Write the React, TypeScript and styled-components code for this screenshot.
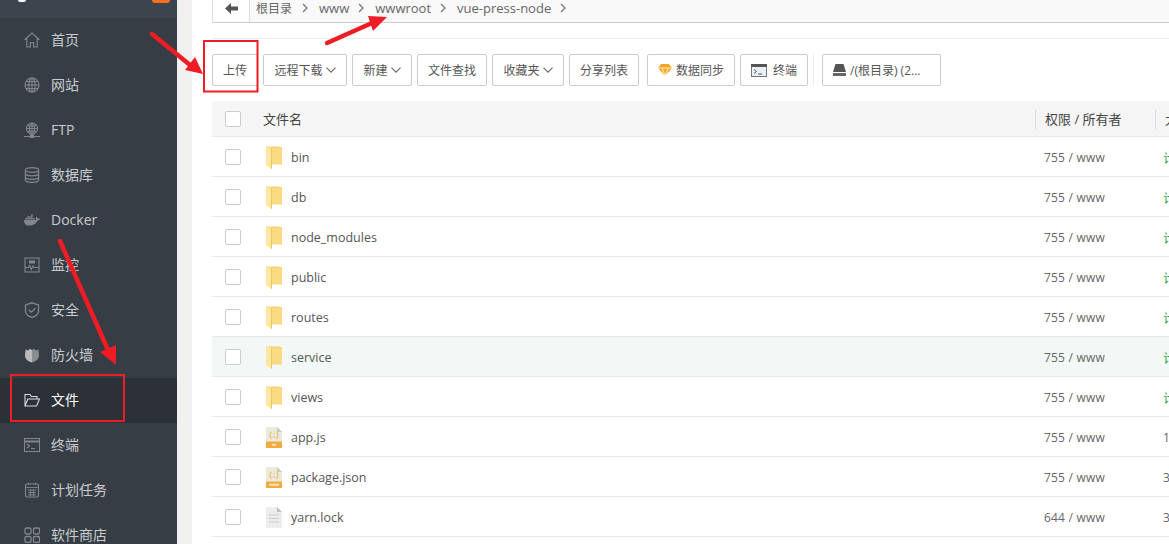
import React from "react";
import styled, { createGlobalStyle } from "styled-components";
import { FaDocker } from "react-icons/fa";

const Global = createGlobalStyle`
  html, body { margin: 0; padding: 0; background: #fff; height: 544px; overflow: hidden; }
  body { font-family: "Open Sans", "Noto Sans CJK SC", sans-serif; }
  * { box-sizing: border-box; }
`;

const Page = styled.div`
  position: relative;
  display: flex;
  width: 1169px;
  height: 544px;
  overflow: hidden;
`;
const Sidebar = styled.aside`
  width: 177px;
  flex: none;
  background: #373d44;
  display: flex;
  flex-direction: column;
`;
const SideHead = styled.div`
  height: 18px;
  flex: none;
  background: #3c444d;
  display: flex;
  align-items: flex-start;
  justify-content: space-between;
  padding: 0 7px 0 18px;
`;
const LogoStub = styled.span`
  width: 8px;
  height: 2px;
  background: #fff;
  border-radius: 0 0 4px 4px;
`;
const BadgeStub = styled.span`
  width: 18px;
  height: 3px;
  background: #f96e1d;
  border-radius: 0 0 5px 5px;
`;
const NavItem = styled.div<{ $active?: boolean }>`
  height: 45px;
  flex: none;
  display: flex;
  align-items: center;
  padding-left: 24px;
  gap: 11px;
  background: ${(p) => (p.$active ? "#2c3138" : "transparent")};
  color: ${(p) => (p.$active ? "#fff" : "#c8ccd0")};
  font-size: 14px;
  line-height: 16px;
  span { display: block; margin-top: -2px; }
  svg { width: 16px; height: 16px; flex: none; margin-top: -2px; color: ${(p) => (p.$active ? "#d8dadc" : "#83878c")}; }
`;
const Gutter = styled.div`
  width: 15px;
  flex: none;
  background: #f0f0f0;
`;
const Main = styled.main`
  flex: 1;
  min-width: 0;
  padding-left: 20px;
  background: #fff;
  overflow: hidden;
`;
const Crumbs = styled.div`
  height: 23px;
  display: flex;
  align-items: flex-end;
  background: #f9f9f9;
  border: 1px solid #ddd;
  border-top: 0;
  border-bottom: 1px solid #ccc;
  border-right: 0;
`;
const Back = styled.div`
  width: 37px;
  height: 22px;
  flex: none;
  background: #fff;
  border-right: 1px solid #ddd;
  display: flex;
  align-items: center;
  justify-content: center;
  padding-bottom: 6px;
  svg { width: 13px; height: 11px; color: #555; }
`;
const Crumb = styled.div<{ $root?: boolean }>`
  display: flex;
  align-items: center;
  height: 22px;
  padding-bottom: 7px;
  font-size: ${(p) => (p.$root ? 12 : 13)}px;
  color: #666;
  margin-left: 6px;
  gap: ${(p) => (p.$root ? 10 : 9)}px;
  svg { width: 6px; height: 10px; color: #777; margin-right: 5px; }
`;
const Rule = styled.div`
  height: 1px;
  margin-top: 15px;
  background: #eee;
`;
const Toolbar = styled.div`
  height: 32px;
  margin-top: 15px;
  display: flex;
  gap: 5px;
`;
const Btn = styled.div<{ $w: number; $gap?: number; $start?: boolean; $offset?: number }>`
  width: ${(p) => p.$w}px;
  height: 32px;
  flex: none;
  margin-left: ${(p) => p.$offset ?? 0}px;
  padding-left: ${(p) => (p.$start ? "10px" : "0")};
  border: 1px solid #ccc;
  border-radius: 2px;
  background: #fff;
  display: flex;
  align-items: center;
  justify-content: ${(p) => (p.$start ? "flex-start" : "center")};
  gap: ${(p) => p.$gap ?? 3}px;
  font-size: 12px;
  color: #555;
`;
const ToolSep = styled.div`
  width: 1px;
  height: 32px;
  background: #eee;
  margin: 0 3px 0 0;
`;
const Head = styled.div`
  height: 36px;
  margin-top: 15px;
  display: grid;
  grid-template-columns: 51px 772px 120px 40px;
  align-items: center;
  background: #f5f5f5;
  border-bottom: 1px solid #e8e8e8;
  width: 980px;
  font-size: 13px;
  color: #444;
`;
const Row = styled.div<{ $hl?: boolean }>`
  height: 40px;
  display: grid;
  grid-template-columns: 51px 28px 753px 119px 40px;
  align-items: center;
  width: 980px;
  border-bottom: 1px solid #e8e8e8;
  background: ${(p) => (p.$hl ? "#f1f8f5" : "#fff")};
  font-size: 12.5px;
  color: #555;
`;
const Check = styled.span`
  width: 16px;
  height: 16px;
  margin-left: 13px;
  display: block;
  border: 1px solid #ccc;
  border-radius: 2px;
  background: #fff;
`;
const HeadCell = styled.div<{ $divider?: boolean }>`
  height: 20px;
  line-height: 20px;
  padding-left: ${(p) => (p.$divider ? "9px" : "0")};
  border-left: ${(p) => (p.$divider ? "1px solid #ddd" : "0")};
  white-space: nowrap;
`;
const NameIcon = styled.div`
  display: flex;
  align-items: center;
  padding-left: 2px;
  svg { width: 18px; height: 24px; display: block; }
`;
const FileName = styled.div`
  padding-top: 2px;
`;
const Perm = styled.div`
  font-size: 12px;
  color: #666;
  letter-spacing: 0.2px;
  padding-top: 2px;
`;
const Size = styled.div<{ $link?: boolean }>`
  font-size: 12px;
  color: ${(p) => (p.$link ? "#20a53a" : "#666")};
  white-space: nowrap;
  padding-top: 2px;
`;
const Overlay = styled.svg`
  position: absolute;
  left: 0;
  top: 0;
  width: 1169px;
  height: 544px;
  pointer-events: none;
`;

const S = { fill: "none", stroke: "currentColor", strokeWidth: 1.1 } as const;
const icons: Record<string, React.ReactNode> = {
  home: <svg viewBox="0 0 16 16" {...S}><path d="M.5 8 8 1l7.5 7M2.8 6.5V15h3.600v-4.500h3.200V15h3.600V6.500" /></svg>,
  globe: <svg viewBox="0 0 16 16" {...S}><circle cx="8" cy="8" r="7" /><ellipse cx="8" cy="8" rx="3.200" ry="7" /><path d="M8 1v14M1 8h14M2 4.500h12M2 11.500h12" /></svg>,
  ftp: <svg viewBox="0 0 16 16" {...S}><circle cx="8" cy="6.500" r="5.500" /><ellipse cx="8" cy="6.500" rx="2.400" ry="5.500" /><path d="M8 1v11M2.500 6.500h11M3.400 3.700h9.200M3.400 9.300h9.200M0 14.500h16" /><rect x="6.300" y="13" width="3.400" height="2.400" fill="currentColor" /></svg>,
  db: <svg viewBox="0 0 16 16" {...S} strokeWidth={1.3}><ellipse cx="8" cy="3" rx="6.600" ry="2.300" /><path d="M1.400 3v10c0 1.300 3 2.300 6.600 2.300s6.600-1 6.600-2.300V3M1.400 6.500c0 1.300 3 2.300 6.600 2.300s6.600-1 6.600-2.300M1.400 10c0 1.300 3 2.300 6.600 2.300s6.600-1 6.600-2.300" /></svg>,
  monitor: <svg viewBox="0 0 16 16" {...S}><rect x="1" y="1" width="14" height="14" /><path d="M1 10.500h3.500l1.200-2 1.600 4 1.700-3.500 1 1.500H15" /><rect x="5" y="3.500" width="6" height="3" fill="currentColor" stroke="none" /></svg>,
  shield: <svg viewBox="0 0 16 16" {...S} strokeWidth={1.3}><path d="M8 .8 14.500 3v6.200c0 3-3 5.200-6.500 6.200-3.500-1-6.500-3.200-6.500-6.200V3z" /><path d="m4.800 7.800 2.400 2.400 4.200-4" /></svg>,
  wall: <svg viewBox="0 0 16 16"><path d="M1.500 2.500 4 3.500 6 1.800 8 3V15.500C4 14.500 1 12 1 8.500z" fill="#b9bbbd" /><path d="M8 3l2-1.200 2 1.700 2.500-1L15 8.500c0 3.500-3 6-7 7z" fill="#8a8d90" /></svg>,
  folder: <svg viewBox="0 0 16 16" {...S}><path d="M1 14V2.500h5l1.300 2H13V7M1 14h11.500L15.500 7H3.800z" /></svg>,
  term: <svg viewBox="0 0 16 16" {...S}><rect x=".5" y="1.500" width="15" height="13" /><path d="M.5 4.500h15" strokeWidth={2} /><path d="m3 7 2.500 2L3 11M7 11.500h4" /></svg>,
  cal: <svg viewBox="0 0 16 16" {...S}><rect x="1.500" y="2" width="13" height="13" rx="1.500" /><path d="M1.500 5.500h13M4.500 .5V3M11.500 .5V3M4 8h8M4 10.500h8M4 13h8M6.500 7.500V14M9.500 7.500V14" strokeWidth={0.9} /></svg>,
  grid: <svg viewBox="0 0 16 16" {...S} strokeWidth={1.3}><rect x="1" y="1" width="6" height="6" rx="1.500" /><rect x="9.500" y="1" width="6" height="6" rx="1.500" /><rect x="1" y="9.500" width="6" height="6" rx="1.500" /><rect x="9.500" y="9.500" width="6" height="6" rx="1.500" /></svg>,
};

const nav: [string, React.ReactNode, boolean?][] = [
  ["首页", icons.home], ["网站", icons.globe], ["FTP", icons.ftp], ["数据库", icons.db],
  ["Docker", <FaDocker key="d" />], ["监控", icons.monitor], ["安全", icons.shield], ["防火墙", icons.wall],
  ["文件", icons.folder, true], ["终端", icons.term], ["计划任务", icons.cal], ["软件商店", icons.grid],
];

const Chevron = () => (
  <svg viewBox="0 0 6 10" fill="none" stroke="currentColor" strokeWidth="1.300"><path d="m1 1 4 4-4 4" /></svg>
);
const Down = () => (
  <svg width="10" height="6" viewBox="0 0 10 6" fill="none" stroke="#666" strokeWidth="1.100"><path d="m.5.700 4.500 4.500L9.500.700" /></svg>
);
const FolderIcon = () => (
  <svg viewBox="0 0 18 24">
    <path d="M1 1.500h12l4 1v17H6z" fill="#f6d270" />
    <path d="M6 3.500h11v15.500H6z" fill="#fadb82" />
    <path d="M1 .5 7 3.500V24L1 20.500z" fill="#fde7a4" />
    <path d="M7 3.500V24l-1-.6V3z" fill="#f0c75e" />
  </svg>
);
const CodeFile = ({ tag }: { tag: string }) => (
  <svg viewBox="0 0 18 24">
    <path d="M1 2h11l5 5v16H1z" fill="#ece9dd" />
    <path d="M12 2l5 5h-5z" fill="#cfcab8" />
    <rect x="1" y="16.500" width="16" height="6.500" fill="#f2ab3f" />
    <path d="M6.500 7c-1.500 0-.5 3-1.800 3.500C6 11 5 14 6.500 14M11.500 7c1.500 0 .5 3 1.800 3.500C12 11 13 14 11.500 14M9 8v1M9 11v2" fill="none" stroke="#efa93e" strokeWidth="1" />
    <rect x={tag === "JS" ? 7 : 4} y="18.800" width={tag === "JS" ? 4 : 10} height="2" fill="#fbe3bd" />
  </svg>
);
const TextFile = () => (
  <svg viewBox="0 0 18 24">
    <path d="M1 2h11l5 5v16H1z" fill="#ecedee" />
    <path d="M12 2l5 5h-5z" fill="#bcbec0" />
    <path d="M4 10h10M4 13.500h10M4 17h10" stroke="#c9cbcd" strokeWidth="1" />
  </svg>
);

const rows: { name: string; perm?: string; icon: React.ReactNode; size: string; link?: boolean; hl?: boolean }[] = [
  { name: "bin", icon: <FolderIcon />, size: "计算", link: true },
  { name: "db", icon: <FolderIcon />, size: "计算", link: true },
  { name: "node_modules", icon: <FolderIcon />, size: "计算", link: true },
  { name: "public", icon: <FolderIcon />, size: "计算", link: true },
  { name: "routes", icon: <FolderIcon />, size: "计算", link: true },
  { name: "service", icon: <FolderIcon />, size: "计算", link: true, hl: true },
  { name: "views", icon: <FolderIcon />, size: "计算", link: true },
  { name: "app.js", icon: <CodeFile tag="JS" />, size: "1.2 KB" },
  { name: "package.json", icon: <CodeFile tag="JSON" />, size: "3.1 KB" },
  { name: "yarn.lock", perm: "644 / www", icon: <TextFile />, size: "36 KB" },
];

export default function App() {
  return (
    <Page>
      <Global />
      <Sidebar>
        <SideHead><LogoStub /><BadgeStub /></SideHead>
        {nav.map(([label, icon, active]) => (
          <NavItem key={label} $active={active}>{icon}<span>{label}</span></NavItem>
        ))}
      </Sidebar>
      <Gutter />
      <Main>
        <Crumbs>
          <Back>
            <svg viewBox="0 0 13 11" fill="currentColor"><path d="M0 5.500 6 0v3.500h7v4H6V11z" /></svg>
          </Back>
          {["根目录", "www", "wwwroot", "vue-press-node"].map((c, i) => (
            <Crumb key={c} $root={i === 0}>{c}<Chevron /></Crumb>
          ))}
        </Crumbs>
        <Rule />
        <Toolbar>
          <Btn $w={46}>上传</Btn>
          <Btn $w={84}>远程下载<Down /></Btn>
          <Btn $w={60}>新建<Down /></Btn>
          <Btn $w={70}>文件查找</Btn>
          <Btn $w={72}>收藏夹<Down /></Btn>
          <Btn $w={70}>分享列表</Btn>
          <Btn $w={88} $gap={4} $offset={3}>
            <svg width="14" height="12" viewBox="0 0 14 12"><path d="M3 0h8l3 4-7 8-7-8z" fill="#f6a623" /><path d="M0 4h14M4 4l3 8 3-8" stroke="#fff" strokeWidth=".8" fill="none" /></svg>
            数据同步
          </Btn>
          <Btn $w={68} $gap={6}>
            <svg width="16" height="13" viewBox="0 0 16 13"><rect x=".5" y=".5" width="15" height="12" fill="#e8f1fa" stroke="#777" /><rect width="16" height="3" fill="#555" /><path d="m3 5.500 2.500 2L3 9.500M7 10h4" stroke="#555" fill="none" /></svg>
            终端
          </Btn>
          <ToolSep />
          <Btn $w={119} $gap={4} $start>
            <svg width="13" height="12" viewBox="0 0 13 12"><path d="M2.500 0h8L13 8H0z" fill="#555" /><rect y="9" width="13" height="3" fill="#666" /></svg>
            /(根目录) (2...
          </Btn>
        </Toolbar>
        <Head>
          <Check />
          <HeadCell>文件名</HeadCell>
          <HeadCell $divider>权限 / 所有者</HeadCell>
          <HeadCell $divider>大小</HeadCell>
        </Head>
        {rows.map((r) => (
          <Row key={r.name} $hl={r.hl}>
            <Check />
            <NameIcon>{r.icon}</NameIcon>
            <FileName>{r.name}</FileName>
            <Perm>{r.perm ?? "755 / www"}</Perm>
            <Size $link={r.link}>{r.size}</Size>
          </Row>
        ))}
      </Main>
      <Overlay viewBox="0 0 1169 544">
        <g fill="none" stroke="#ee1c25" strokeWidth="2">
          <rect x="204" y="41" width="53.500" height="50.500" />
          <rect x="11" y="375" width="113" height="46" />
        </g>
        <g stroke="#ee1c25" strokeWidth="4.500" strokeLinecap="round">
          <path d="M152 34 190 65" />
          <path d="M327 43 372 23" />
          <path d="M60 241 108 350" />
        </g>
        <g fill="#ee1c25">
          <path d="M203 74 185 70 195 57z" />
          <path d="M387 17 373 31 368 16z" />
          <path d="M116 365 100 352 116 345z" />
        </g>
      </Overlay>
    </Page>
  );
}
